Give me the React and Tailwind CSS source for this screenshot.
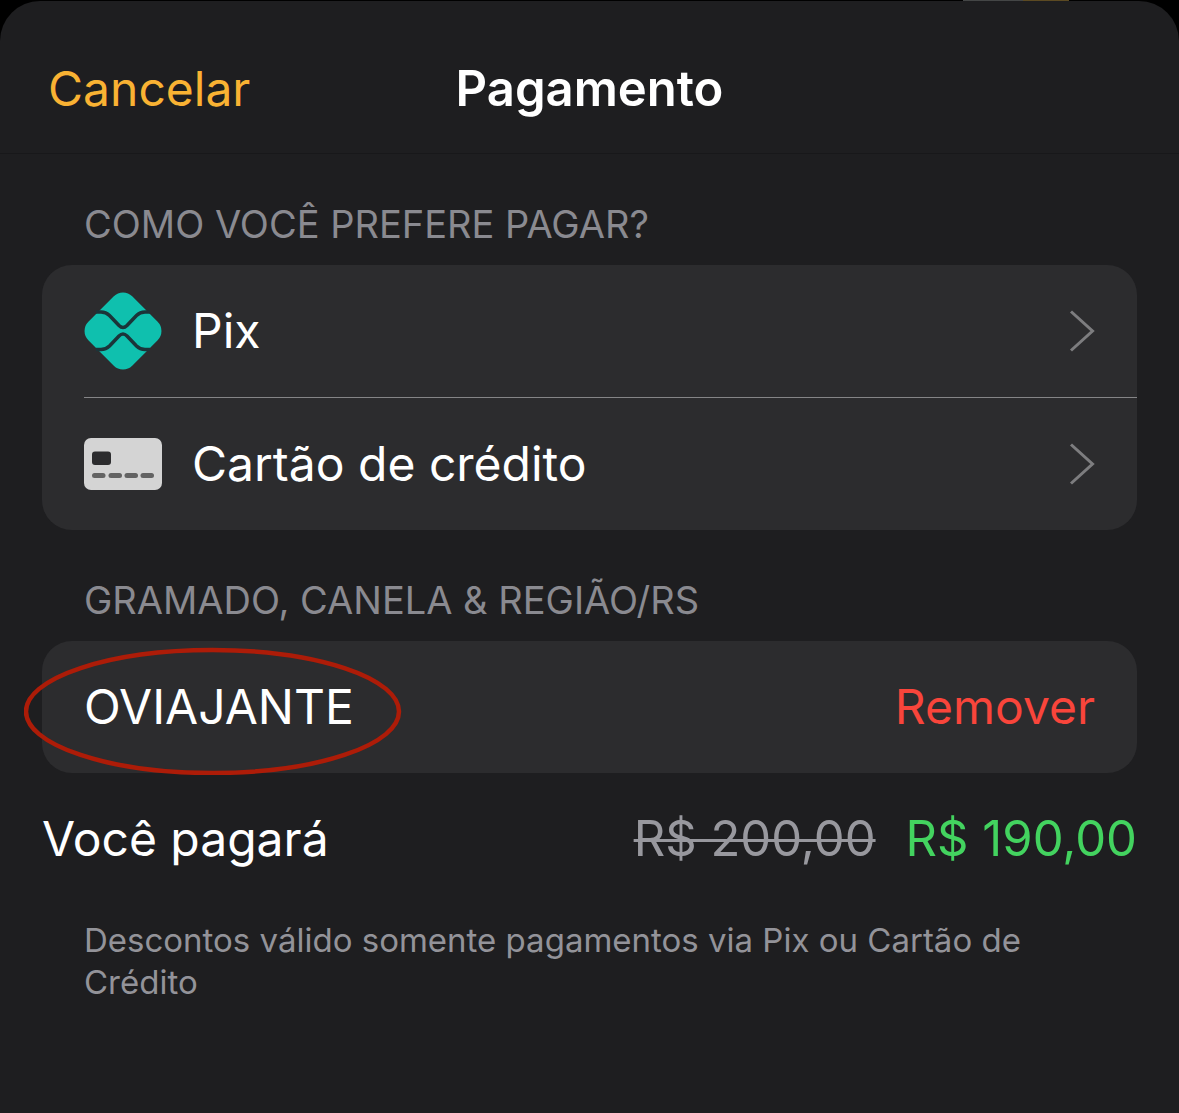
import React from "react";

const paymentMethods = [
  { id: "pix", label: "Pix", Icon: PixIcon },
  { id: "card", label: "Cartão de crédito", Icon: CardIcon },
];

function PixIcon() {
  return (
    <svg className="w-[78px] h-[78px] shrink-0" viewBox="0 0 78 78" aria-hidden="true">
      <rect x="8" y="8" width="62" height="62" rx="13" fill="#0fc0ae" transform="rotate(45 39 39)" />
      <g fill="none" stroke="#1b3439" strokeWidth="3.500">
        <path d="M12 20H17Q22 20 25.500 23.500L35 33.500Q39 37.500 43 33.500L52.500 23.500Q56 20 61 20H66" />
        <path d="M12 57.500H17Q22 57.500 25.500 54L35 44Q39 40 43 44L52.500 54Q56 57.500 61 57.500H66" />
      </g>
    </svg>
  );
}

function CardIcon() {
  return (
    <svg className="w-[78px] h-[52px] shrink-0" viewBox="0 0 78 52" aria-hidden="true">
      <rect width="78" height="52" rx="7" fill="#d4d4d4" />
      <rect x="8" y="13.500" width="19" height="13.500" rx="3" fill="#2c2c2e" />
      <g fill="#636363">
        <rect x="8" y="35" width="13.500" height="5" rx="2.500" />
        <rect x="24.500" y="35" width="13.500" height="5" rx="2.500" />
        <rect x="40.500" y="35" width="13.500" height="5" rx="2.500" />
        <rect x="56.500" y="35" width="13.500" height="5" rx="2.500" />
      </g>
    </svg>
  );
}

function Chevron() {
  return (
    <svg className="w-[26px] h-[42px] shrink-0" viewBox="0 0 26 42" fill="none" aria-hidden="true">
      <path d="M2 1.500L23.500 21L2 40.500" stroke="#7d7d7f" strokeWidth="3" />
    </svg>
  );
}

export default function App() {
  return (
    <div className="min-h-screen bg-black font-['Inter',sans-serif] text-[48px] leading-[60px] text-white">
      {/* Strip of the screen behind the sheet */}
      <div className="h-px flex justify-end pr-[110px]">
        <div className="w-[60px] bg-[#444646]" />
        <div className="w-[46px] bg-[#5c4a22]" />
      </div>

      <div className="min-h-[calc(100vh-1px)] rounded-t-[40px] bg-[#1e1e20]">
        <header className="grid grid-cols-[1fr_auto_1fr] items-center px-12 pt-[58px] pb-[34px] border-b border-[#18181a]">
          <button type="button" className="justify-self-start text-[#f9b233]">
            Cancelar
          </button>
          <h1 className="text-[49px] font-semibold">Pagamento</h1>
        </header>

        <main className="px-[42px] pt-[47px]">
          <section>
            <h2 className="px-[42px] text-[38px] leading-[46px] text-[#8a8a90]">
              COMO VOCÊ PREFERE PAGAR?
            </h2>
            <ul className="mt-[18px] rounded-[30px] bg-[#2c2c2e]">
              {paymentMethods.map(({ id, label, Icon }, index) => (
                <li key={id} className="pl-[42px]">
                  <button
                    type="button"
                    className={
                      index > 0
                        ? "flex w-full h-[133px] items-center gap-[30px] pr-[42px] text-left border-t border-[#858587]"
                        : "flex w-full h-[132px] items-center gap-[30px] pr-[42px] text-left"
                    }
                  >
                    <Icon />
                    <span className="flex-1">{label}</span>
                    <Chevron />
                  </button>
                </li>
              ))}
            </ul>
          </section>

          <section className="mt-[47px]">
            <h2 className="px-[42px] text-[38px] leading-[46px] text-[#8a8a90]">
              GRAMADO, CANELA &amp; REGIÃO/RS
            </h2>
            <div className="relative mt-[18px] flex h-[132px] items-center justify-between rounded-[30px] bg-[#2c2c2e] px-[42px]">
              <span>OVIAJANTE</span>
              <button type="button" className="text-[#f9453b]">
                Remover
              </button>
              {/* Hand-drawn highlight around the coupon */}
              <svg
                className="absolute -left-[18px] top-[6px] w-[378px] h-[128px] pointer-events-none"
                viewBox="0 0 378 128"
                fill="none"
                aria-hidden="true"
              >
                <ellipse cx="188.500" cy="64.500" rx="186.500" ry="61.500" stroke="#ad1c08" strokeWidth="4.500" />
              </svg>
            </div>
          </section>

          <div className="mt-9 flex items-center justify-between">
            <span>Você pagará</span>
            <div className="flex gap-[30px] text-[49px]">
              <s className="text-[#98989e] decoration-[3px]">R$ 200,00</s>
              <span className="text-[#43d35f]">R$ 190,00</span>
            </div>
          </div>

          <p className="mt-[50px] px-[42px] text-[33px] leading-[42px] text-[#939399]">
            Descontos válido somente pagamentos via Pix ou Cartão de Crédito
          </p>
        </main>
      </div>
    </div>
  );
}
